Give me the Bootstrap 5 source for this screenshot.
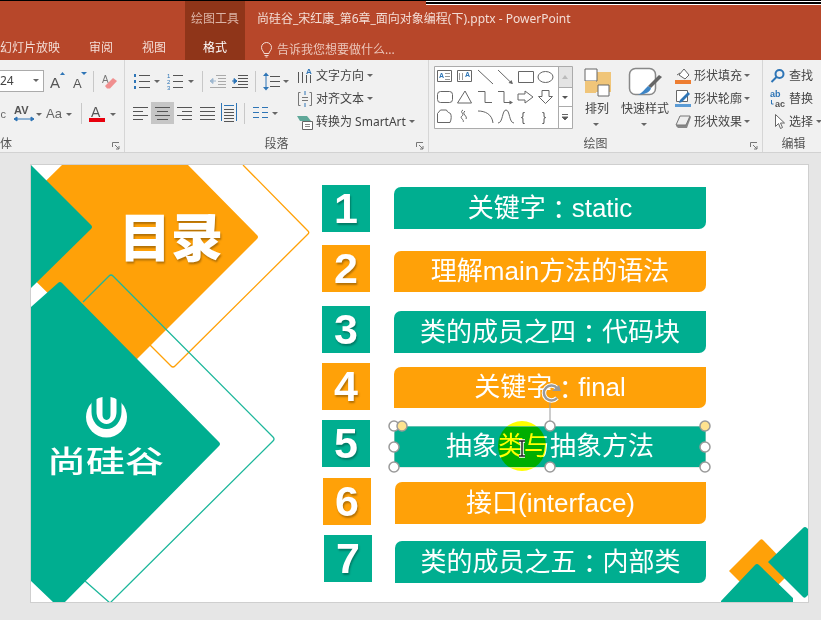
<!DOCTYPE html>
<html lang="zh">
<head>
    <meta charset="UTF-8">
    <title>尚硅谷_宋红康_第6章_面向对象编程(下).pptx - PowerPoint</title>
    <link href="https://cdn.jsdelivr.net/npm/bootstrap@5.3.0/dist/css/bootstrap.min.css" rel="stylesheet">
    <style>
        html, body { height: 620px; overflow: hidden; }
        body { background: #e6e6e6; font-family: "Noto Sans", "Noto Sans CJK SC", sans-serif; font-size: 12px; color: #444; }
        svg { display: block; flex: none; }
        svg text { font-family: "Liberation Sans", "Noto Sans CJK SC", sans-serif; }

        /* title bar */
        .title-bar { height: 60px; background: #b7472a; border-top: 1px solid #000; color: #f3ddd6; position: relative; }
        .top-strip { position: absolute; left: 426px; right: 0; top: 0; height: 4px; background: #000; border-top: 1px solid #fff; border-bottom: 1px solid #fff; }
        .tab-col { height: 59px; }
        .tab-left { width: 185px; }
        .tab-tool { width: 60px; background: #8f3519; }
        .tool-name { color: #dcb4a6; }
        .tab-top { height: 32px; padding-top: 10px; line-height: 16px; }
        .tab-bottom { height: 27px; line-height: 16px; padding-top: 7px; white-space: nowrap; }
        .tab-gap { margin-left: 29px; }
        .title-text { padding-left: 12px; }
        .tell-me { padding-left: 15px; color: #ecc7bb; }

        /* ribbon */
        .ribbon { height: 93px; background: #f1f1f1; border-bottom: 1px solid #d2d2d2; overflow: hidden; }
        .rb-group { position: relative; height: 92px; border-right: 1px solid #d6d6d6; flex: none; }
        .rb-font { width: 125px; }
        .rb-para { width: 304px; }
        .rb-draw { width: 334px; }
        .rb-edit { flex: 1; border-right: 0; }
        .rb-label { position: absolute; left: 0; right: 0; bottom: 0; height: 17px; line-height: 17px; text-align: center; color: #555; }
        .rb-launcher { position: absolute; right: 4px; bottom: 2px; }
        .rb-rows { padding-top: 10px; gap: 10px; }
        .font-box { width: 44px; height: 22px; background: #fff; border: 1px solid #ababab; border-left: 0; line-height: 20px; padding-right: 2px; }
        .para-left { width: 172px; }
        .cmd-col { padding-top: 4px; }
        .cmd-item { height: 23px; line-height: 23px; white-space: nowrap; gap: 3px; }
        .cmd-col-draw { margin-top: -2px; }
        .cmd-col-draw .cmd-item { gap: 2px; }
        .edit-col { padding-left: 7px; }
        .edit-col .cmd-item { gap: 3px; }
        .big-btn { line-height: 16px; text-align: center; white-space: nowrap; }
        .big-btn svg + span { margin-top: 2px; }
        .big-btn span + svg { margin-top: 6px; }
        .btn-arrange { width: 36px; margin-left: 6px; }
        .btn-styles { width: 60px; }
        .draw-top { padding: 6px 0 0 5px; }

        /* slide */
        .workspace { padding: 11px 0 0 30px; }
        .slide { position: relative; width: 779px; height: 439px; background: #fff; border: 1px solid #cfcfcf; overflow: hidden; }
        .deco, .overlay { position: absolute; left: 0; top: 0; }
        .overlay { pointer-events: none; }
        .toc-num, .toc-bar { position: absolute; color: #fff; display: flex; align-items: center; justify-content: center; font-family: "Liberation Sans", "Noto Sans CJK SC", sans-serif; white-space: pre; }
        .toc-num { width: 48px; height: 47px; font-size: 43px; font-weight: 700; text-shadow: 1px 2px 2px rgba(0, 0, 0, .3); }
        .toc-bar { width: 312px; height: 42px; font-size: 26px; border-radius: 7px 0 7px 0; }
        .toc-colon { font-family: "Noto Sans CJK TC", sans-serif; line-height: 1; }
        .toc-teal { background: #00ae90; }
        .toc-orange { background: #ffa108; }
        .n1 { left: 291px; top: 20px; }  .b1 { left: 363px; top: 22px; }
        .n2 { left: 291px; top: 80px; }  .b2 { left: 363px; top: 86px; height: 41px; }
        .n3 { left: 291px; top: 141px; } .b3 { left: 363px; top: 146px; }
        .n4 { left: 291px; top: 198px; } .b4 { left: 363px; top: 202px; height: 41px; }
        .n5 { left: 291px; top: 255px; } .b5 { left: 363px; top: 261px; height: 41px; }
        .n6 { left: 292px; top: 313px; } .b6 { left: 364px; top: 317px; width: 311px; }
        .n7 { left: 293px; top: 370px; } .b7 { left: 364px; top: 376px; width: 311px; }
        .slide-title { position: absolute; left: 88px; top: 35px; font: 900 52px/70px "Noto Sans CJK SC", sans-serif; color: #fff; text-shadow: 1px 2px 2px rgba(0, 0, 0, .3); white-space: nowrap; }
        .logo-text { position: absolute; left: 16px; top: 269px; font: 500 39px/50px "Noto Sans CJK SC", sans-serif; color: #fff; white-space: nowrap; transform: scaleY(.76); }
        .cursor-spot { position: absolute; left: 467px; top: 256px; width: 48px; height: 50px; border-radius: 50%; background: #ffff00; mix-blend-mode: multiply; }
    </style>
</head>
<body>

    <div class="title-bar d-flex">
        <div class="top-strip"></div>
        <div class="tab-col tab-left d-flex flex-column">
            <div class="tab-top"></div>
            <div class="tab-bottom d-flex">
                <span>幻灯片放映</span>
                <span class="tab-gap">审阅</span>
                <span class="tab-gap">视图</span>
            </div>
        </div>
        <div class="tab-col tab-tool text-center">
            <div class="tab-top tool-name">绘图工具</div>
            <div class="tab-bottom text-white">格式</div>
        </div>
        <div class="tab-col flex-grow-1">
            <div class="tab-top title-text">尚硅谷_宋红康_第6章_面向对象编程(下).pptx - PowerPoint</div>
            <div class="tab-bottom tell-me d-flex align-items-center gap-1">
                <svg width="13" height="16" viewBox="0 0 13 16" fill="none" stroke="#f3ddd6" stroke-width="1"><path d="M4 11.500c0-2-2.500-3-2.500-6a5 5 0 0 1 10 0c0 3-2.500 4-2.500 6zM4.500 13.500h4M5.500 15h2"/></svg>
                <span>告诉我您想要做什么...</span>
            </div>
        </div>
    </div>

    <div class="ribbon d-flex">
        <!-- 字体 -->
        <div class="rb-group rb-font">
            <div class="rb-rows d-flex flex-column">
                <div class="d-flex">
                    <div class="font-box d-flex justify-content-between align-items-center">
                        <span>24</span>
                        <svg width="8" height="4"><path d="M0 0h6l-3 3z" fill="#666"/></svg>
                    </div>
                    <svg width="80" height="22" viewBox="44 71 80 22">
                        <text x="50" y="89" font-size="15" fill="#555">A</text><path d="M60 76l2.500-3 2.500 3z" fill="#2e75b6"/>
                        <text x="73" y="89" font-size="13" fill="#555">A</text><path d="M81 73h6l-3 3z" fill="#2e75b6"/>
                        <path d="M93.500 72v21" stroke="#c8c8c8"/>
                        <text x="102" y="84" font-size="10" fill="#777">A</text>
                        <path d="M105 87l8-8 4 3-7 7.500h-3z" fill="#f08f8f"/>
                    </svg>
                </div>
                <svg width="124" height="22" viewBox="0 103 124 22">
                    <text x="0.500" y="119" font-size="11" fill="#666">c</text>
                    <text x="14" y="115" font-size="11" font-weight="700" fill="#555">AV</text>
                    <path d="M14 120h20M14 120l3-2v4zM34 120l-3-2v4z" stroke="#2e75b6" fill="#2e75b6"/>
                    <path d="M36 114h6l-3 3z" fill="#666"/>
                    <text x="46" y="119" font-size="13" fill="#666">Aa</text>
                    <path d="M66 114h6l-3 3z" fill="#666"/>
                    <path d="M81.500 104v21" stroke="#c8c8c8"/>
                    <text x="91" y="118" font-size="14" fill="#555">A</text>
                    <path d="M89 119h16v4H89z" fill="#e8000d"/>
                    <path d="M110 114h6l-3 3z" fill="#666"/>
                </svg>
            </div>
            <div class="rb-label text-start">体</div>
            <svg class="rb-launcher" width="8" height="8" viewBox="0 0 8 8" fill="none" stroke="#777"><path d="M.500 5V.500H7M3 3l4 4M7 4v3H4"/></svg>
        </div>

        <!-- 段落 -->
        <div class="rb-group rb-para d-flex">
            <div class="para-left rb-rows d-flex flex-column">
                <svg width="172" height="22" viewBox="125 71 172 22" fill="none" stroke="#555">
                    <path d="M139 76.500h11M139 82.500h11M139 88.500h11"/>
                    <path d="M134 76.500h2M134 82.500h2M134 88.500h2" stroke="#2e75b6" stroke-width="3"/>
                    <path d="M154 81h6l-3 3z" fill="#666" stroke="none"/>
                    <path d="M173 76.500h10M173 82.500h10M173 88.500h10"/>
                    <text x="167" y="79" font-size="6" fill="#2e75b6" stroke="none">1</text>
                    <text x="167" y="85" font-size="6" fill="#2e75b6" stroke="none">2</text>
                    <text x="167" y="91" font-size="6" fill="#2e75b6" stroke="none">3</text>
                    <path d="M188 81h6l-3 3z" fill="#666" stroke="none"/>
                    <path d="M202.500 72v21" stroke="#c8c8c8"/>
                    <path d="M216 76.500h10M218 79.500h8M218 82.500h8M218 85.500h8M210 88.500h16" stroke="#aaa"/>
                    <path d="M210 82h6M210 82l3-2.500v5z" stroke="#9fb8d0" fill="#9fb8d0"/>
                    <path d="M238 76.500h10M238 79.500h10M238 82.500h10M238 85.500h10M232 88.500h16"/>
                    <path d="M232 82h5M237 82l-3-2.500v5z" stroke="#2e75b6" fill="#2e75b6"/>
                    <path d="M255.500 72v21" stroke="#c8c8c8"/>
                    <path d="M270 77.500h10M270 82.500h10M270 87.500h10"/>
                    <path d="M266 75v15" stroke="#2e75b6"/>
                    <path d="M263 77l3-3.500 3 3.500zM263 88l3 3.500 3-3.500z" fill="#2e75b6" stroke="none"/>
                    <path d="M283 81h6l-3 3z" fill="#666" stroke="none"/>
                </svg>
                <svg width="172" height="22" viewBox="125 103 172 22" fill="none" stroke="#555">
                    <path d="M151 103h23v23h-23z" fill="#c6c6c6" stroke="none"/>
                    <path d="M133 108.500h15M133 112.500h10M133 116.500h15M133 120.500h10"/>
                    <path d="M155 108.500h15M157 112.500h11M155 116.500h15M157 120.500h11"/>
                    <path d="M177 108.500h15M182 112.500h10M177 116.500h15M182 120.500h10"/>
                    <path d="M200 108.500h15M200 112.500h15M200 116.500h15M200 120.500h15"/>
                    <path d="M221.500 104v18M236.500 104v18M224 106.500h10" stroke="#2e75b6"/>
                    <path d="M224 110.500h10M224 113.500h10M224 116.500h10M224 119.500h10M224 122.500h10"/>
                    <path d="M244.500 104v21" stroke="#c8c8c8"/>
                    <path d="M253 108.500h6M253 113.500h6M253 118.500h6M262 108.500h6M262 113.500h6M262 118.500h6" stroke="#2e75b6"/>
                    <path d="M272 113h6l-3 3z" fill="#666" stroke="none"/>
                </svg>
            </div>
            <div class="cmd-col d-flex flex-column">
                <div class="cmd-item d-flex align-items-center">
                    <svg width="16" height="18" viewBox="0 0 16 18" fill="none" stroke="#555"><path d="M1.500 5v11M5.500 5v11M9.500 8v8M13.500 8v8"/><text x="9" y="7" font-size="8" font-weight="700" fill="#2e75b6" stroke="none">A</text></svg>
                    <span>文字方向</span>
                    <svg width="8" height="4"><path d="M0 0h6l-3 3z" fill="#666"/></svg>
                </div>
                <div class="cmd-item d-flex align-items-center">
                    <svg width="16" height="18" viewBox="0 0 16 18" fill="none" stroke="#777"><path d="M3.500 2.500h-2v13h2M12.500 2.500h2v13h-2M5 7.500h6M5 10.500h6"/><path d="M8 1v4M8 17v-4" stroke="#2e75b6"/></svg>
                    <span>对齐文本</span>
                    <svg width="8" height="4"><path d="M0 0h6l-3 3z" fill="#666"/></svg>
                </div>
                <div class="cmd-item d-flex align-items-center">
                    <svg width="16" height="18" viewBox="0 0 16 18"><path d="M0 3h10l4 5H3z" fill="#5fa899"/><path d="M5.500 8.500h10v8h-10z" fill="#fff" stroke="#666"/><path d="M8 11.500h5M8 13.500h5" stroke="#888"/></svg>
                    <span>转换为 SmartArt</span>
                    <svg width="8" height="4"><path d="M0 0h6l-3 3z" fill="#666"/></svg>
                </div>
            </div>
            <div class="rb-label">段落</div>
            <svg class="rb-launcher" width="8" height="8" viewBox="0 0 8 8" fill="none" stroke="#777"><path d="M.500 5V.500H7M3 3l4 4M7 4v3H4"/></svg>
        </div>

        <!-- 绘图 -->
        <div class="rb-group rb-draw">
            <div class="draw-top d-flex">
                <svg width="139" height="63" viewBox="434 67 139 63" fill="none" stroke="#666">
                    <path d="M434.500 67.500h138v62h-138z" fill="#fff" stroke="#ababab"/>
                    <path d="M558 68h14v20h-14z" fill="#e4e4e4" stroke="none"/>
                    <path d="M558.500 67.500v62M558.500 88.500h14M558.500 107.500h14" stroke="#ababab"/>
                    <path d="M562 80l3-4 3 4z" fill="#bbb" stroke="none"/>
                    <path d="M562 97h6l-3 3z" fill="#555" stroke="none"/>
                    <path d="M562 115.500h6M562 118h6l-3 3z" fill="#555" stroke-width="1"/>
                    <!-- row 1 -->
                    <path d="M437.500 71.500h14v11h-14zM457.500 71.500h14v11h-14z"/>
                    <text x="439" y="79" font-size="7" font-weight="700" fill="#2e75b6" stroke="none">A</text>
                    <path d="M445 74.500h5M445 77.500h5M445 80.500h5" stroke="#999"/>
                    <text x="465" y="78" font-size="7" font-weight="700" fill="#2e75b6" stroke="none">A</text>
                    <path d="M459.500 74v7M462.500 74v7" stroke="#999"/>
                    <path d="M478 71l15 14M498 71l14 13.500"/><path d="M513 85l-4.500-1 3-3z" fill="#666" stroke="none"/>
                    <path d="M518.500 72.500h15v11h-15z"/><ellipse cx="545.500" cy="78" rx="7.500" ry="5.500"/>
                    <!-- row 2 -->
                    <rect x="437.500" y="92.500" width="15" height="11" rx="3"/>
                    <path d="M465 92l6.500 12h-14z"/>
                    <path d="M478 92.500h7v11h7M498 92.500h6v11h7"/><path d="M513 103.500l-3.500-2v4z" fill="#666" stroke="none"/>
                    <path d="M518 95h7v-3l8 6-8 6v-3h-7z"/>
                    <path d="M542 91.500h7v6h3.500l-7 7-7-7h3.500z"/>
                    <!-- row 3 -->
                    <path d="M437.500 114.500l3-3.500h6c1 2 1 2 4 3.500 1 2 1 6-.500 9h-12.500z"/>
                    <path d="M463 111c-4 2 2 4 -1 6s3 4 1 6" /><path d="M465 112c-4 3 3 5 1 8"/>
                    <path d="M478 112c7 0 14 3 15 12M498 124c5 0 4-13 8-13s3 13 8 13"/>
                    <text x="521" y="122" font-size="12" fill="#555" stroke="none">{</text>
                    <text x="542" y="122" font-size="12" fill="#555" stroke="none">}</text>
                </svg>
                <div class="big-btn btn-arrange d-flex flex-column align-items-center">
                    <svg width="30" height="33" viewBox="0 0 30 33"><path d="M12 6h17v20H12z" fill="#f0c579"/><path d="M3 3h12v12H3z" fill="#fff" stroke="#666"/><path d="M16 19h11v11H16z" fill="#fff" stroke="#666"/><path d="M3 15h11v12H3z" fill="#f0c579"/></svg>
                    <span>排列</span>
                    <svg width="8" height="4"><path d="M0 0h6l-3 3z" fill="#666"/></svg>
                </div>
                <div class="big-btn btn-styles d-flex flex-column align-items-center">
                    <svg width="36" height="33" viewBox="0 0 36 33"><rect x="2.500" y="2.500" width="26" height="26" rx="6" fill="#fff" stroke="#888" stroke-width="1.500"/><path d="M35 11L24 22l-3-2L32 9z" fill="#666"/><path d="M21 20l3 2c-1 5-7 6-13 7 4-2 6-5 10-9z" fill="#3d85c6"/></svg>
                    <span>快速样式</span>
                    <svg width="8" height="4"><path d="M0 0h6l-3 3z" fill="#666"/></svg>
                </div>
                <div class="d-flex flex-column cmd-col-draw">
                    <div class="cmd-item d-flex align-items-center">
                        <svg width="17" height="20" viewBox="0 0 17 20"><path d="M4 9l5-6 5 6-4 4z" fill="#fff" stroke="#666"/><path d="M2 9l3-2" stroke="#666"/><path d="M0 14h16v4H0z" fill="#ed7d31"/></svg>
                        <span>形状填充</span>
                        <svg width="8" height="4"><path d="M0 0h6l-3 3z" fill="#666"/></svg>
                    </div>
                    <div class="cmd-item d-flex align-items-center">
                        <svg width="17" height="20" viewBox="0 0 17 20"><path d="M1.500 1.500h11v11h-11z" fill="#fff" stroke="#666"/><path d="M5 11l8-8 2 2-8 8-3 1z" fill="#2e75b6"/><path d="M0 15h16v3H0z" fill="#5b9bd5"/></svg>
                        <span>形状轮廓</span>
                        <svg width="8" height="4"><path d="M0 0h6l-3 3z" fill="#666"/></svg>
                    </div>
                    <div class="cmd-item d-flex align-items-center">
                        <svg width="17" height="20" viewBox="0 0 17 20"><path d="M5 4h10l1 1-4 11H3L1 14z" fill="#888"/><path d="M5 4h10l-4 9H1z" fill="#eee" stroke="#777"/></svg>
                        <span>形状效果</span>
                        <svg width="8" height="4"><path d="M0 0h6l-3 3z" fill="#666"/></svg>
                    </div>
                </div>
            </div>
            <div class="rb-label">绘图</div>
            <svg class="rb-launcher" width="8" height="8" viewBox="0 0 8 8" fill="none" stroke="#777"><path d="M.500 5V.500H7M3 3l4 4M7 4v3H4"/></svg>
        </div>

        <!-- 编辑 -->
        <div class="rb-group rb-edit">
            <div class="cmd-col d-flex flex-column edit-col">
                <div class="cmd-item d-flex align-items-center">
                    <svg width="16" height="16" viewBox="0 0 16 16" fill="none" stroke="#2e75b6" stroke-width="2"><circle cx="9.500" cy="6" r="4"/><path d="M6.500 9L1.500 14"/></svg>
                    <span>查找</span>
                </div>
                <div class="cmd-item d-flex align-items-center">
                    <svg width="16" height="20" viewBox="0 0 16 20"><text x="0" y="8" font-size="9" fill="#2e75b6" font-weight="700">ab</text><text x="5" y="18" font-size="9" fill="#555" font-weight="700">ac</text><path d="M1.500 11v4h2" fill="none" stroke="#2e75b6"/></svg>
                    <span>替换</span>
                </div>
                <div class="cmd-item d-flex align-items-center">
                    <svg width="16" height="17" viewBox="0 0 16 17"><path d="M5.500 1.500v12l3-3 2 5 2-1-2-4.500h4z" fill="#fff" stroke="#666"/></svg>
                    <span>选择</span>
                    <svg width="8" height="4"><path d="M0 0h6l-3 3z" fill="#666"/></svg>
                </div>
            </div>
            <div class="rb-label">编辑</div>
        </div>
    </div>

    <div class="workspace">
        <div class="slide">
            <!-- 幻灯片背景图形，坐标为截图坐标 -->
            <svg class="deco" width="777" height="437" viewBox="31 165 777 437">
                <path d="M243 165l65 66q1.500 1.500 0 3L175 366q-2 2-4 0l-21-21" fill="none" stroke="#ffa108" stroke-width="1.300"/>
                <path d="M62 165h126l69 70q2 2 0 4L126 370 -10 236z" fill="#ffa108"/>
                <path d="M31 165l60 60q2 2 0 4l-60 59z" fill="#00ae90"/>
                <path d="M31 307l27-24q2-2 4 0l157 159q2 2 0 4L65 602H53l-22-21z" fill="#00ae90"/>
                <path d="M83 302l26-26q2-2 4 0l160 161q2 2 0 4L110 603 85 581" fill="none" stroke="#1db79b" stroke-width="1.300"/>
                <!-- 右下角 -->
                <path d="M760 540q1.500-1.500 3 0l29.500 30.500-32 32-31.500-31.500z" fill="#ffa108"/>
                <path d="M768 562l35-34q2-2 4 0l2 2v64l-3 3q-1.500 1.500-3 0z" fill="#00ae90"/>
                <path d="M755 565q2-2 4 0l34 33v5h-72v-2z" fill="#00ae90"/>
                <!-- 尚硅谷 logo -->
                <circle cx="106.500" cy="417" r="20.500" fill="#fff"/>
                <path d="M94 392v20a12.500 14.500 0 0 0 25 0v-20" fill="none" stroke="#00ae90" stroke-width="5"/>
                <path d="M102.500 392h8v23a4 5 0 0 1-8 0z" fill="#00ae90"/>
            </svg>
            <div class="slide-title">目录</div>
            <div class="logo-text">尚硅谷</div>

            <div class="toc-num toc-teal n1">1</div>
            <div class="toc-bar toc-teal b1">关键字<span class="toc-colon">：</span>static</div>
            <div class="toc-num toc-orange n2">2</div>
            <div class="toc-bar toc-orange b2">理解main方法的语法</div>
            <div class="toc-num toc-teal n3">3</div>
            <div class="toc-bar toc-teal b3">类的成员之四<span class="toc-colon">：</span>代码块</div>
            <div class="toc-num toc-orange n4">4</div>
            <div class="toc-bar toc-orange b4">关键字<span class="toc-colon">：</span>final</div>
            <div class="toc-num toc-teal n5">5</div>
            <div class="toc-bar toc-teal b5">抽象类与抽象方法</div>
            <div class="toc-num toc-orange n6">6</div>
            <div class="toc-bar toc-orange b6">接口(interface)</div>
            <div class="toc-num toc-teal n7">7</div>
            <div class="toc-bar toc-teal b7">类的成员之五<span class="toc-colon">：</span>内部类</div>

            <div class="cursor-spot"></div>

            <!-- 选中框和控制点 -->
            <svg class="overlay" width="777" height="437" viewBox="31 165 777 437" fill="#fff" stroke="#9a9a9a" stroke-width="1.500">
                <path d="M394.500 426.500h311v41h-311z" fill="none" stroke="#c5d6d0" stroke-dasharray="1 1" stroke-width="1"/>
                <path d="M550 426v-28" fill="none" stroke-width="1"/>
                <circle cx="394" cy="426" r="5"/><circle cx="550" cy="426" r="5"/>
                <circle cx="394" cy="447" r="5"/><circle cx="705" cy="447" r="5"/>
                <circle cx="394" cy="467" r="5"/><circle cx="550" cy="467" r="5"/><circle cx="705" cy="467" r="5"/>
                <circle cx="402" cy="426" r="5" fill="#ffe38f"/><circle cx="705" cy="426" r="5" fill="#ffe38f"/>
                <path d="M557 388a7.500 7.500 0 1 0 0 10" fill="none" stroke="#fff" stroke-width="4.500"/>
                <path d="M557 388a7.500 7.500 0 1 0 0 10" fill="none" stroke="#9a9a9a" stroke-width="2.500"/>
                <path d="M552 391h9l-2-6z" fill="#9a9a9a" stroke="none"/>
                <path d="M519 441h6M519 456h6M522 441v15" fill="none" stroke="#fff" stroke-width="3.500"/>
                <path d="M519 441h6M519 456h6M522 441v15" fill="none" stroke="#222" stroke-width="1.500"/>
            </svg>
        </div>
    </div>

</body>
</html>
